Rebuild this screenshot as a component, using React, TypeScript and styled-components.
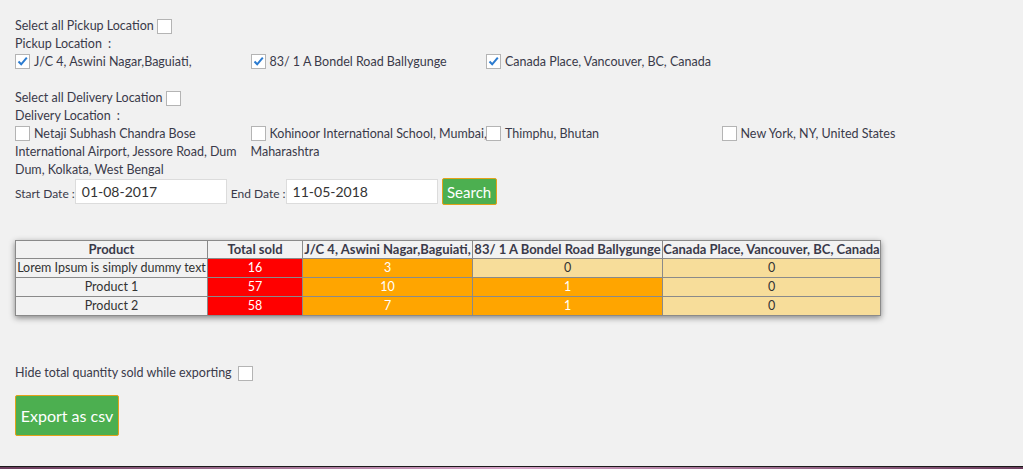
import React from "react";
import styled, { createGlobalStyle } from "styled-components";

const Global = createGlobalStyle`
  html, body { margin: 0; padding: 0; background: #f1f1f1; }
  body { font-family: "Lato", "Open Sans", sans-serif; font-size: 12.5px; color: #3a3a4a; }
`;

const Page = styled.div`
  height: 466px;
  padding: 17px 0 0 15px;
  box-sizing: border-box;
  overflow: hidden;
`;

const Line = styled.div<{ $mt?: number }>`
  display: flex;
  align-items: center;
  height: 18px;
  line-height: 18px;
  margin-top: ${(p) => p.$mt ?? 0}px;
  white-space: nowrap;
`;

const Grid = styled.div`
  display: grid;
  grid-template-columns: repeat(4, 235.5px);
  line-height: 18px;
`;

const Item = styled.div`
  margin-right: -4px;
`;

const Box = styled.span`
  display: inline-block;
  vertical-align: -3px;
  width: 13px;
  height: 13px;
  border: 1px solid #b4b4b4;
  background: #fff;
  margin-right: 4px;
  position: relative;
`;

const Check = () => (
  <svg width="13" height="13" viewBox="0 0 13 13" style={{ position: "absolute", left: 0, top: 0 }}>
    <path d="M2.5 6.5 L5.2 9.3 L10.8 2.6" fill="none" stroke="#2b7bd0" strokeWidth="2" />
  </svg>
);

const CheckBox = ({ checked, ml }: { checked?: boolean; ml?: number }) => (
  <Box style={ml ? { marginLeft: ml } : undefined}>{checked && <Check />}</Box>
);

const Colon = styled.span`
  margin-left: 6px;
`;

const DateRow = styled.div`
  display: flex;
  align-items: center;
  margin-top: -1px;
  height: 27px;
`;

const Label = styled.span`
  font-size: 12px;
  margin-right: 0;
  padding-top: 3px;
`;

const Input = styled.div`
  width: 144px;
  height: 23px;
  border: 1px solid #dcdcdc;
  background: #fff;
  box-sizing: content-box;
  font-size: 14px;
  line-height: 23px;
  padding-left: 6px;
  margin-right: 4px;
  color: #333;
`;

const Button = styled.button<{ $big?: boolean }>`
  background: #4caf50;
  color: #fff;
  border: 1px solid #e3a21a;
  border-radius: 2px;
  font-family: inherit;
  font-size: ${(p) => (p.$big ? "16px" : "15px")};
  padding: 0;
  width: ${(p) => (p.$big ? "104px" : "55px")};
  height: ${(p) => (p.$big ? "41px" : "27px")};
  margin: 0;
  cursor: pointer;
`;

const Table = styled.table`
  border-collapse: collapse;
  margin-top: 35px;
  box-shadow: 0 2px 6px rgba(0, 0, 0, 0.45);
  font-size: 12.5px;
  white-space: nowrap;
`;

const Th = styled.th<{ $w: number }>`
  width: ${(p) => p.$w}px;
  border: 1px solid #8a8a8a;
  background: #f2f2f2;
  height: 17px;
  padding: 0;
  font-weight: bold;
  font-size: 13px;
  color: #3a3a4a;
  line-height: 17px;
`;

const Td = styled.td<{ $bg: string; $light?: boolean }>`
  border: 1px solid #8a8a8a;
  background: ${(p) => p.$bg};
  color: ${(p) => (p.$light ? "#fff" : "#333")};
  text-align: center;
  height: 18px;
  padding: 0;
  line-height: 18px;
`;

const ExportWrap = styled.div`
  margin-top: 13px;
`;

const Footer = styled.div`
  height: 3px;
  border-top: 1px solid #1a1a1a;
  background: linear-gradient(90deg, #6b3c5c, #d7a4c8 50%, #6b3c5c);
`;

const RED = "#ff0000";
const ORANGE = "#ffa500";
const PALE = "#f7dd9a";

const rows = [
  { name: "Lorem Ipsum is simply dummy text", total: 16, a: 3, b: 0, c: 0 },
  { name: "Product 1", total: 57, a: 10, b: 1, c: 0 },
  { name: "Product 2", total: 58, a: 7, b: 1, c: 0 },
];

export default function App() {
  return (
    <>
      <Global />
      <Page>
        <Line>
          Select all Pickup Location
          <CheckBox ml={3} />
        </Line>
        <Line $mt={0}>
          Pickup Location<Colon>:</Colon>
        </Line>
        <Grid>
          <Item><CheckBox checked />J/C 4, Aswini Nagar,Baguiati,</Item>
          <Item><CheckBox checked />83/ 1 A Bondel Road Ballygunge</Item>
          <Item><CheckBox checked />Canada Place, Vancouver, BC, Canada</Item>
        </Grid>
        <Line $mt={18}>
          Select all Delivery Location
          <CheckBox ml={3} />
        </Line>
        <Line>
          Delivery Location<Colon>:</Colon>
        </Line>
        <Grid>
          <Item><CheckBox />Netaji Subhash Chandra Bose International Airport, Jessore Road, Dum Dum, Kolkata, West Bengal</Item>
          <Item><CheckBox />Kohinoor International School, Mumbai, Maharashtra</Item>
          <Item><CheckBox />Thimphu, Bhutan</Item>
          <Item><CheckBox />New York, NY, United States</Item>
        </Grid>
        <DateRow>
          <Label>Start Date :</Label>
          <Input>01-08-2017</Input>
          <Label>End Date :</Label>
          <Input>11-05-2018</Input>
          <Button>Search</Button>
        </DateRow>
        <Table>
          <thead>
            <tr>
              <Th $w={191}>Product</Th>
              <Th $w={94}>Total sold</Th>
              <Th $w={169}>J/C 4, Aswini Nagar,Baguiati,</Th>
              <Th $w={189}>83/ 1 A Bondel Road Ballygunge</Th>
              <Th $w={217}>Canada Place, Vancouver, BC, Canada</Th>
            </tr>
          </thead>
          <tbody>
            {rows.map((r) => (
              <tr key={r.name}>
                <Td $bg="#f2f2f2">{r.name}</Td>
                <Td $bg={RED} $light>{r.total}</Td>
                <Td $bg={r.a > 0 ? ORANGE : PALE} $light={r.a > 0}>{r.a}</Td>
                <Td $bg={r.b > 0 ? ORANGE : PALE} $light={r.b > 0}>{r.b}</Td>
                <Td $bg={r.c > 0 ? ORANGE : PALE} $light={r.c > 0}>{r.c}</Td>
              </tr>
            ))}
          </tbody>
        </Table>
        <Line $mt={48}>
          Hide total quantity sold while exporting
          <CheckBox ml={6} />
        </Line>
        <ExportWrap>
          <Button $big>Export as csv</Button>
        </ExportWrap>
      </Page>
      <Footer />
    </>
  );
}
